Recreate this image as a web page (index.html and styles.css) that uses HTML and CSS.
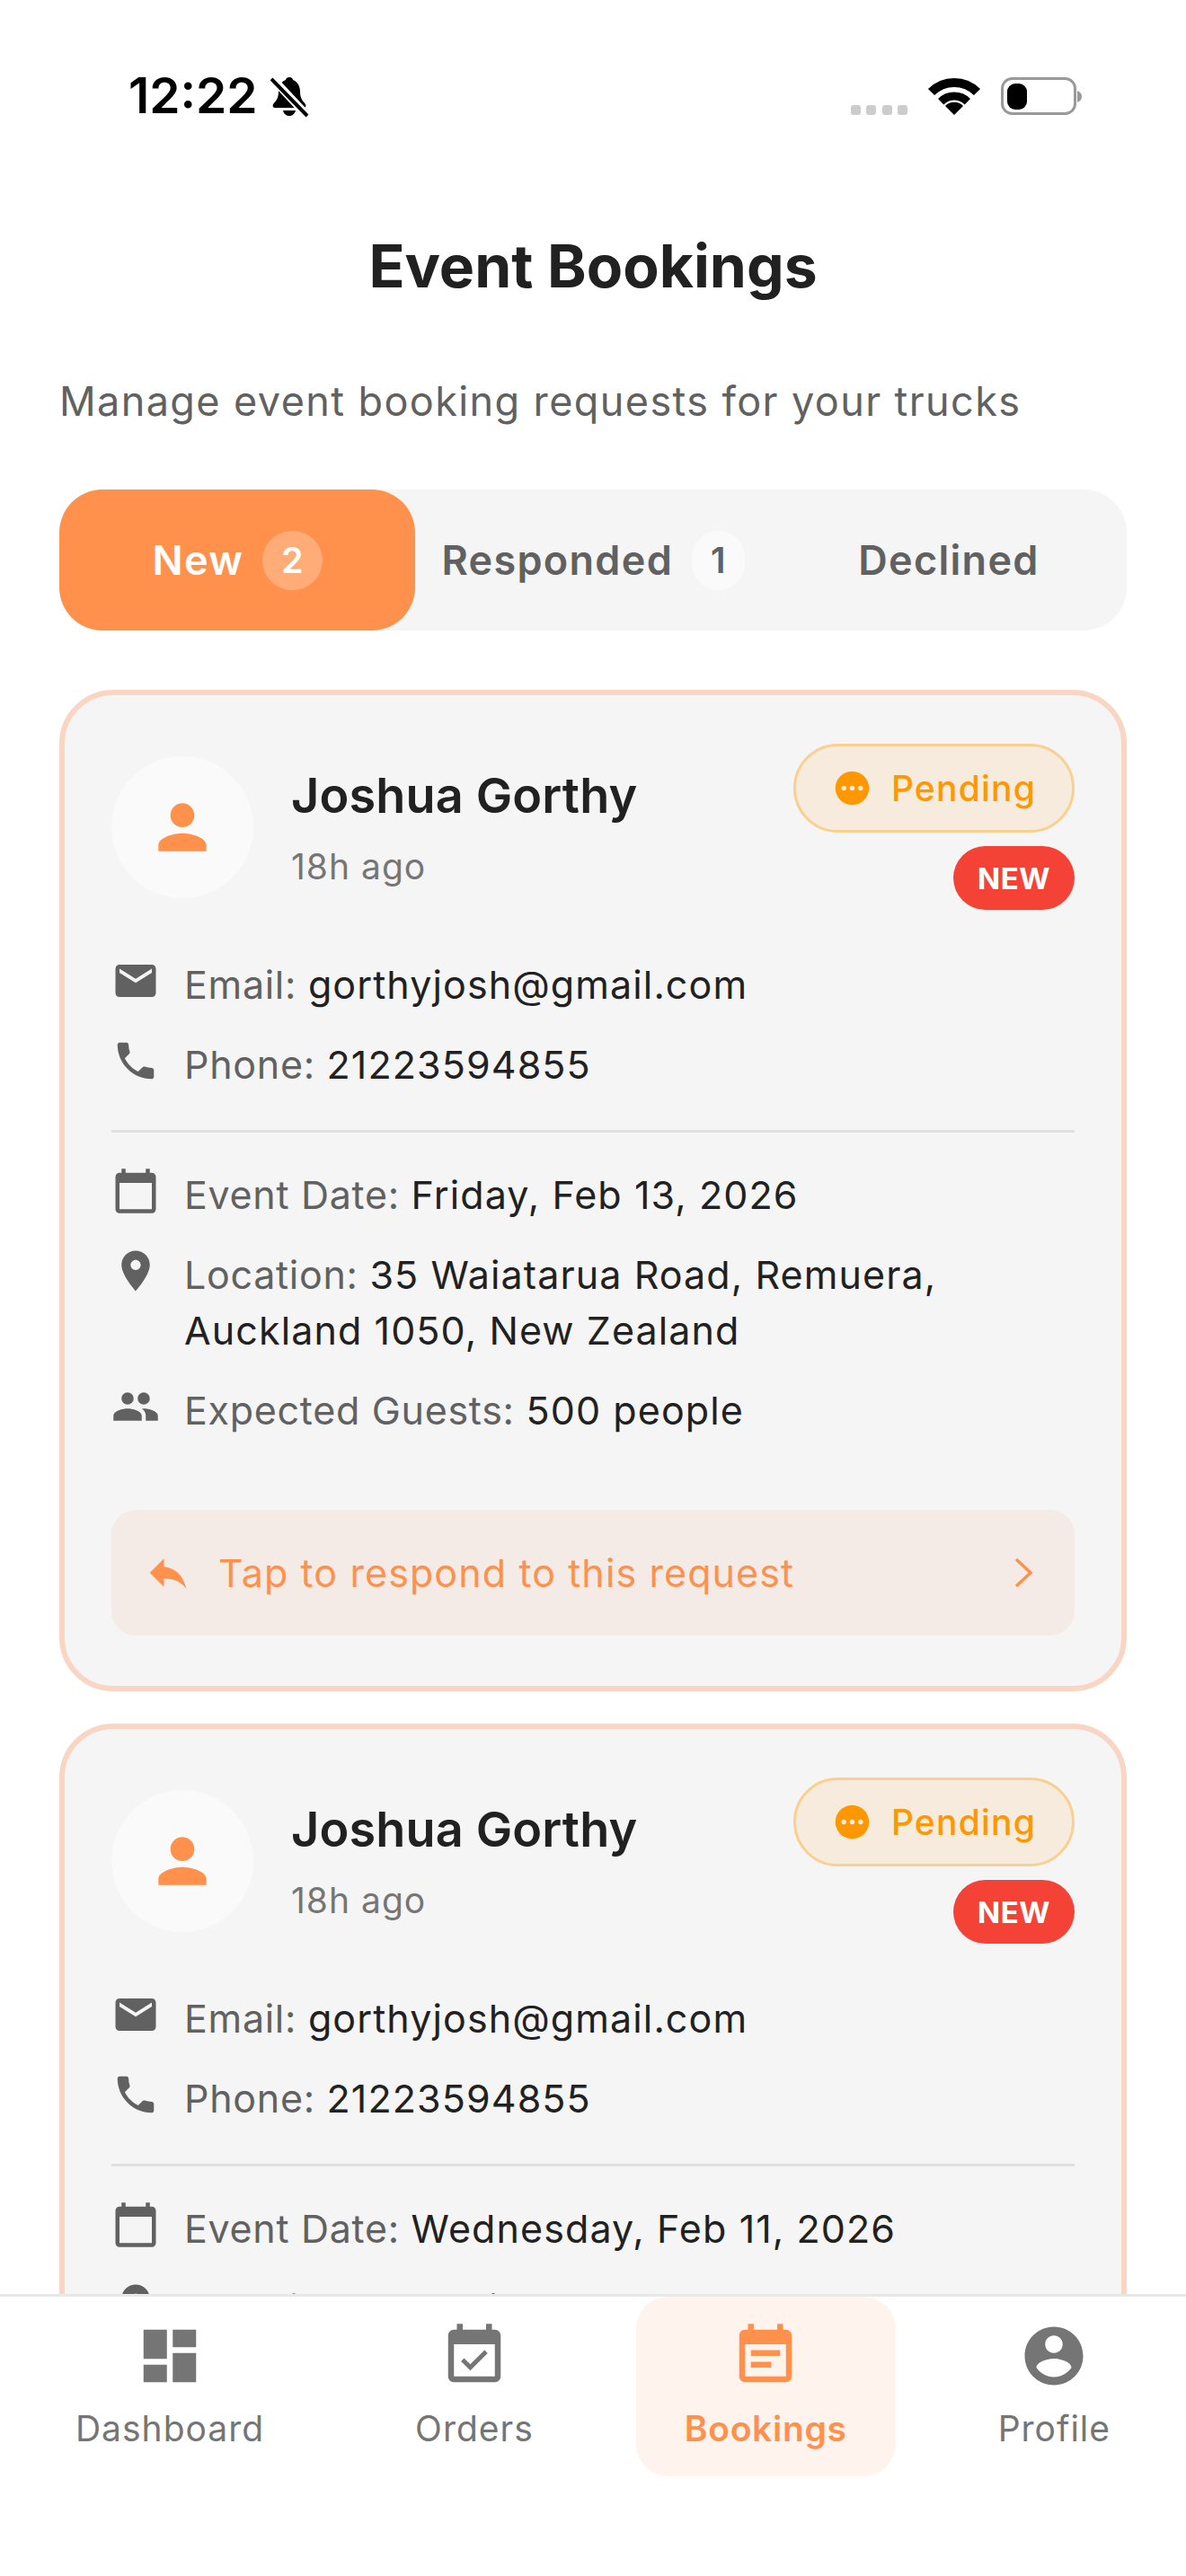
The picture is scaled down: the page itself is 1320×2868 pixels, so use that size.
FILE: index.html
```html
<!DOCTYPE html>
<html lang="en">
    <head>
        <meta charset="UTF-8" />
        <meta name="viewport" content="width=device-width, initial-scale=1.0" />
        <title>Event Bookings</title>
        <link rel="stylesheet" href="styles.css">
    </head>
    <body>
        <svg class="sprites" xmlns="http://www.w3.org/2000/svg">
            <symbol id="i-email" viewBox="0 0 24 24"><path d="M20 4H4c-1.1 0-1.99.9-1.99 2L2 18c0 1.1.9 2 2 2h16c1.1 0 2-.9 2-2V6c0-1.1-.9-2-2-2zm0 4l-8 5-8-5V6l8 5 8-5v2z"/></symbol>
            <symbol id="i-phone" viewBox="0 0 24 24"><path d="M6.62 10.79c1.44 2.83 3.76 5.14 6.59 6.59l2.2-2.2c.27-.27.67-.36 1.02-.24 1.12.37 2.33.57 3.57.57.55 0 1 .45 1 1V20c0 .55-.45 1-1 1-9.39 0-17-7.61-17-17 0-.55.45-1 1-1h3.5c.55 0 1 .45 1 1 0 1.25.2 2.45.57 3.57.11.35.03.74-.25 1.02l-2.2 2.2z"/></symbol>
            <symbol id="i-calendar" viewBox="0 0 24 24"><path d="M20 3h-1V1h-2v2H7V1H5v2H4c-1.1 0-2 .9-2 2v16c0 1.1.9 2 2 2h16c1.1 0 2-.9 2-2V5c0-1.1-.9-2-2-2zm0 18H4V8h16v13z"/></symbol>
            <symbol id="i-place" viewBox="0 0 24 24"><path d="M12 2C8.13 2 5 5.13 5 9c0 5.25 7 13 7 13s7-7.75 7-13c0-3.87-3.13-7-7-7zm0 9.5c-1.38 0-2.5-1.12-2.5-2.5s1.12-2.5 2.5-2.5 2.5 1.12 2.5 2.5-1.12 2.5-2.5 2.5z"/></symbol>
            <symbol id="i-people" viewBox="0 0 24 24"><path d="M16 11c1.66 0 2.99-1.34 2.99-3S17.66 5 16 5c-1.66 0-3 1.34-3 3s1.34 3 3 3zm-8 0c1.66 0 2.99-1.34 2.99-3S9.66 5 8 5C6.34 5 5 6.34 5 8s1.34 3 3 3zm0 2c-2.33 0-7 1.17-7 3.5V19h14v-2.5c0-2.33-4.67-3.5-7-3.5zm8 0c-.29 0-.62.02-.97.05 1.16.84 1.97 1.97 1.97 3.45V19h6v-2.5c0-2.33-4.67-3.5-7-3.5z"/></symbol>
            <symbol id="i-reply" viewBox="0 0 24 24"><path d="M10 9V5l-7 7 7 7v-4.1c5 0 8.5 1.6 11 5.1-1-5-4-10-11-11z"/></symbol>
            <symbol id="i-person" viewBox="0 0 24 24"><path d="M12 12c2.21 0 4-1.79 4-4s-1.79-4-4-4-4 1.79-4 4 1.79 4 4 4zm0 2c-2.67 0-8 1.34-8 4v2h16v-2c0-2.66-5.33-4-8-4z"/></symbol>
            <symbol id="i-pending" viewBox="0 0 24 24"><path fill-rule="evenodd" d="M12 2C6.48 2 2 6.48 2 12s4.48 10 10 10 10-4.48 10-10S17.52 2 12 2zM7 13.5c-.83 0-1.5-.67-1.5-1.5s.67-1.5 1.5-1.5 1.5.67 1.5 1.5-.67 1.5-1.5 1.5zm5 0c-.83 0-1.5-.67-1.5-1.5s.67-1.5 1.5-1.5 1.5.67 1.5 1.5-.67 1.5-1.5 1.5zm5 0c-.83 0-1.5-.67-1.5-1.5s.67-1.5 1.5-1.5 1.5.67 1.5 1.5-.67 1.5-1.5 1.5z"/></symbol>
            <symbol id="i-dashboard" viewBox="0 0 24 24"><path d="M3 13h8V3H3v10zm0 8h8v-6H3v6zm10 0h8V11h-8v10zm0-18v6h8V3h-8z"/></symbol>
            <symbol id="i-orders" viewBox="0 0 24 24"><path d="M16.53 11.06L15.47 10l-4.88 4.88-2.12-2.12-1.06 1.06L10.59 17l5.94-5.94zM19 3h-1V1h-2v2H8V1H6v2H5c-1.11 0-1.99.9-1.99 2L3 19c0 1.1.89 2 2 2h14c1.1 0 2-.9 2-2V5c0-1.1-.9-2-2-2zm0 16H5V8h14v11z"/></symbol>
            <symbol id="i-bookings" viewBox="0 0 24 24"><path d="M17 10H7v2h10v-2zm2-7h-1V1h-2v2H8V1H6v2H5c-1.11 0-1.99.9-1.99 2L3 19c0 1.1.89 2 2 2h14c1.1 0 2-.9 2-2V5c0-1.1-.9-2-2-2zm0 16H5V8h14v11zm-5-5H7v2h7v-2z"/></symbol>
            <symbol id="i-profile" viewBox="0 0 24 24"><path d="M12 2C6.48 2 2 6.48 2 12s4.48 10 10 10 10-4.48 10-10S17.52 2 12 2zm0 3c1.66 0 3 1.34 3 3s-1.34 3-3 3-3-1.34-3-3 1.34-3 3-3zm0 14.2c-2.5 0-4.71-1.28-6-3.22.03-1.99 4-3.08 6-3.08 1.99 0 5.97 1.09 6 3.08-1.29 1.94-3.5 3.22-6 3.22z"/></symbol>
        </svg>

        <div class="app">
            <header class="status-bar">
                <div class="status-left">
                    <span class="status-time">12:22</span>
                    <svg class="status-bell" viewBox="0 0 44 47">
                        <path d="M21 1c3 0 4 2 4 3 6 2 8 8 8 13 0 9 4 11 6 14 1 2 0 4-2 4H5c-2 0-3-2-2-4 2-3 6-5 6-14 0-5 2-11 8-13 0-1 1-3 4-3z"/>
                        <path d="M14 38h14c-1 4-4 6-7 6s-6-2-7-6z"/>
                        <path class="bell-gap" d="M1 1l41 44"/>
                        <path class="bell-line" d="M1 3l40 41"/>
                    </svg>
                </div>
                <svg class="status-right" viewBox="0 0 258 44">
                    <g fill="#ccc">
                        <rect x="0" y="31" width="11" height="11" rx="3"/>
                        <rect x="17" y="31" width="11" height="11" rx="3"/>
                        <rect x="35" y="31" width="11" height="11" rx="3"/>
                        <rect x="52" y="31" width="11" height="11" rx="3"/>
                    </g>
                    <path d="M89.5 16.5A36 36 0 0 1 140.5 16.5" fill="none" stroke="#000" stroke-width="10"/>
                    <path d="M100.2 27.2A21 21 0 0 1 129.8 27.2" fill="none" stroke="#000" stroke-width="9"/>
                    <path d="M115 42L105 32A14 14 0 0 1 125 32Z"/>
                    <rect x="168.5" y="1.5" width="81" height="39" rx="11" fill="none" stroke="#999" stroke-width="3"/>
                    <rect x="174" y="7" width="22" height="29" rx="9"/>
                    <path d="M252 15Q257 17 257 21.5Q257 26 252 28Z" fill="#999"/>
                </svg>
            </header>

            <main class="content">
                <h1 class="page-title">Event Bookings</h1>
                <p class="page-sub">Manage event booking requests for your trucks</p>

                <div class="tabs">
                    <div class="tab tab-active">New <span class="tab-badge">2</span></div>
                    <div class="tab">Responded <span class="tab-badge">1</span></div>
                    <div class="tab">Declined</div>
                </div>

                <section class="card">
                    <div class="card-head">
                        <div class="avatar"><svg class="avatar-icon"><use href="#i-person"/></svg></div>
                        <div class="who">
                            <div class="who-name">Joshua Gorthy</div>
                            <div class="who-time">18h ago</div>
                        </div>
                        <div class="badges">
                            <span class="pill-pending"><svg class="pill-icon"><use href="#i-pending"/></svg>Pending</span>
                            <span class="pill-new">NEW</span>
                        </div>
                    </div>
                    <div class="info">
                        <div class="row"><svg class="row-icon"><use href="#i-email"/></svg><p>Email: <b>gorthyjosh@gmail.com</b></p></div>
                        <div class="row"><svg class="row-icon"><use href="#i-phone"/></svg><p>Phone: <b>21223594855</b></p></div>
                    </div>
                    <div class="info info-split">
                        <div class="row"><svg class="row-icon"><use href="#i-calendar"/></svg><p>Event Date: <b>Friday, Feb 13, 2026</b></p></div>
                        <div class="row"><svg class="row-icon"><use href="#i-place"/></svg><p>Location: <b>35 Waiatarua Road, Remuera, Auckland 1050, New Zealand</b></p></div>
                        <div class="row"><svg class="row-icon"><use href="#i-people"/></svg><p>Expected Guests: <b>500 people</b></p></div>
                    </div>
                    <div class="cta">
                        <svg class="cta-icon"><use href="#i-reply"/></svg>
                        <span class="cta-text">Tap to respond to this request</span>
                        <svg class="cta-arrow" viewBox="0 0 24 36"><path d="M3 3l16 15L3 33"/></svg>
                    </div>
                </section>

                <section class="card">
                    <div class="card-head">
                        <div class="avatar"><svg class="avatar-icon"><use href="#i-person"/></svg></div>
                        <div class="who">
                            <div class="who-name">Joshua Gorthy</div>
                            <div class="who-time">18h ago</div>
                        </div>
                        <div class="badges">
                            <span class="pill-pending"><svg class="pill-icon"><use href="#i-pending"/></svg>Pending</span>
                            <span class="pill-new">NEW</span>
                        </div>
                    </div>
                    <div class="info">
                        <div class="row"><svg class="row-icon"><use href="#i-email"/></svg><p>Email: <b>gorthyjosh@gmail.com</b></p></div>
                        <div class="row"><svg class="row-icon"><use href="#i-phone"/></svg><p>Phone: <b>21223594855</b></p></div>
                    </div>
                    <div class="info info-split">
                        <div class="row"><svg class="row-icon"><use href="#i-calendar"/></svg><p>Event Date: <b>Wednesday, Feb 11, 2026</b></p></div>
                        <div class="row"><svg class="row-icon"><use href="#i-place"/></svg><p>Location: <b>27 Waiatarua Road, Remuera</b></p></div>
                    </div>
                </section>
            </main>

            <nav class="nav">
                <div class="nav-item"><svg class="nav-icon"><use href="#i-dashboard"/></svg><span>Dashboard</span></div>
                <div class="nav-item"><svg class="nav-icon"><use href="#i-orders"/></svg><span>Orders</span></div>
                <div class="nav-item nav-active"><svg class="nav-icon"><use href="#i-bookings"/></svg><span>Bookings</span></div>
                <div class="nav-item"><svg class="nav-icon"><use href="#i-profile"/></svg><span>Profile</span></div>
            </nav>
        </div>
    </body>
</html>
```

FILE: styles.css
```css
* {
    box-sizing: border-box;
}
body {
    margin: 0;
    background: #fff;
    font-family: Inter, "Liberation Sans", sans-serif;
    color: #212121;
}
.sprites {
    display: none;
}
.app {
    height: 2868px;
    display: flex;
    flex-direction: column;
    overflow: hidden;
}

/* status bar */
.status-bar {
    flex: none;
    height: 214px;
    padding: 85px 115px 0 143px;
    display: flex;
    justify-content: space-between;
    align-items: flex-start;
}
.status-left {
    display: flex;
    align-items: flex-start;
    gap: 14px;
}
.status-time {
    font-size: 55px;
    font-weight: 600;
    line-height: 43px;
    color: #000;
}
.status-bell {
    width: 44px;
    height: 47px;
}
.bell-gap {
    stroke: #fff;
    stroke-width: 9;
}
.bell-line {
    stroke: #000;
    stroke-width: 4;
}
.status-right {
    width: 258px;
    height: 44px;
    margin-top: 1px;
}

/* page header */
.content {
    flex: 1;
    min-height: 0;
    overflow: hidden;
    padding: 0 66px;
}
.page-title {
    margin: 42px 0 0;
    font-size: 66px;
    line-height: 80px;
    font-weight: 700;
    text-align: center;
}
.page-sub {
    margin: 80px 0 0;
    font-size: 45px;
    line-height: 62px;
    letter-spacing: 1.4px;
    color: #616161;
}

/* tabs */
.tabs {
    margin-top: 67px;
    height: 157px;
    display: flex;
    background: #f5f5f5;
    border-radius: 48px;
}
.tab {
    flex: 1;
    display: flex;
    align-items: center;
    justify-content: center;
    gap: 21px;
    font-size: 45px;
    font-weight: 600;
    letter-spacing: 1.3px;
    color: #616161;
    border-radius: 48px;
}
.tab-active {
    background: #ff914d;
    color: #fff;
}
.tab-badge {
    height: 66px;
    padding: 0 21px;
    display: flex;
    align-items: center;
    border-radius: 33px;
    font-size: 39px;
    letter-spacing: 0;
    background: #fafafa;
}
.tab-active .tab-badge {
    background: rgba(255, 255, 255, 0.25);
}

/* booking card */
.card {
    margin-top: 66px;
    padding: 54px 52px 56px;
    background: #f5f5f5;
    border: 6px solid #f9d6c3;
    border-radius: 60px;
}
.card + .card {
    margin-top: 36px;
}
.card-head {
    display: flex;
    align-items: center;
}
.avatar {
    flex: none;
    width: 158px;
    height: 158px;
    display: flex;
    align-items: center;
    justify-content: center;
    border-radius: 50%;
    background: #fafafa;
}
.avatar-icon {
    width: 80px;
    height: 80px;
    fill: #ff914d;
}
.who {
    flex: 1;
    margin-left: 42px;
}
.who-name {
    font-size: 54px;
    font-weight: 600;
    line-height: 72px;
    letter-spacing: 0.15px;
}
.who-time {
    margin-top: 16px;
    font-size: 39px;
    line-height: 54px;
    letter-spacing: 1px;
    color: #757575;
}
.badges {
    display: flex;
    flex-direction: column;
    align-items: flex-end;
    gap: 15px;
}
.pill-pending {
    height: 99px;
    padding: 0 40px;
    display: flex;
    align-items: center;
    gap: 21px;
    background: #f7ebde;
    border: 3px solid #f9d08f;
    border-radius: 50px;
    font-size: 39px;
    font-weight: 500;
    letter-spacing: 1.2px;
    color: #ff9800;
}
.pill-icon {
    width: 45px;
    height: 45px;
    fill: #ff9800;
}
.pill-new {
    height: 71px;
    padding: 0 27px;
    display: flex;
    align-items: center;
    background: #f44336;
    border-radius: 36px;
    font-size: 33px;
    font-weight: 700;
    letter-spacing: 0.5px;
    color: #fff;
}

/* info rows */
.info {
    margin-top: 52px;
    display: flex;
    flex-direction: column;
    gap: 27px;
}
.info-split {
    margin-top: 42px;
    padding-top: 38px;
    border-top: 3px solid #e0e0e0;
}
.row {
    display: flex;
    align-items: flex-start;
}
.row p {
    margin: 0;
    font-size: 43px;
    line-height: 62px;
    letter-spacing: 0.7px;
    color: #616161;
}
.row b {
    font-weight: 400;
    letter-spacing: 1.1px;
    color: #212121;
}
.row-icon {
    flex: none;
    width: 54px;
    height: 54px;
    margin-right: 27px;
    fill: #616161;
}

/* respond strip */
.cta {
    margin-top: 80px;
    height: 140px;
    padding: 0 44px 0 36px;
    display: flex;
    align-items: center;
    background: #f5ebe6;
    border-radius: 27px;
}
.cta-icon {
    flex: none;
    width: 54px;
    height: 54px;
    fill: #ff914d;
}
.cta-text {
    flex: 1;
    margin-left: 29px;
    font-size: 43px;
    font-weight: 400;
    letter-spacing: 1.1px;
    color: #ff914d;
}
.cta-arrow {
    width: 24px;
    height: 36px;
    fill: none;
    stroke: #ff914d;
    stroke-width: 3.5;
}

/* bottom nav */
.nav {
    flex: none;
    height: 314px;
    display: flex;
    justify-content: space-around;
    align-items: flex-start;
    background: #fff;
    border-top: 3px solid #e8e8e8;
}
.nav-item {
    height: 200px;
    padding: 27px 54px 0;
    display: flex;
    flex-direction: column;
    align-items: center;
    gap: 15px;
    border-radius: 36px;
    font-size: 39px;
    line-height: 54px;
    letter-spacing: 1px;
    color: #757575;
}
.nav-icon {
    width: 78px;
    height: 78px;
    fill: #757575;
}
.nav-active {
    background: #fff3ed;
    font-weight: 600;
    letter-spacing: 0.7px;
    color: #ff914d;
}
.nav-active .nav-icon {
    fill: #ff914d;
}
```
